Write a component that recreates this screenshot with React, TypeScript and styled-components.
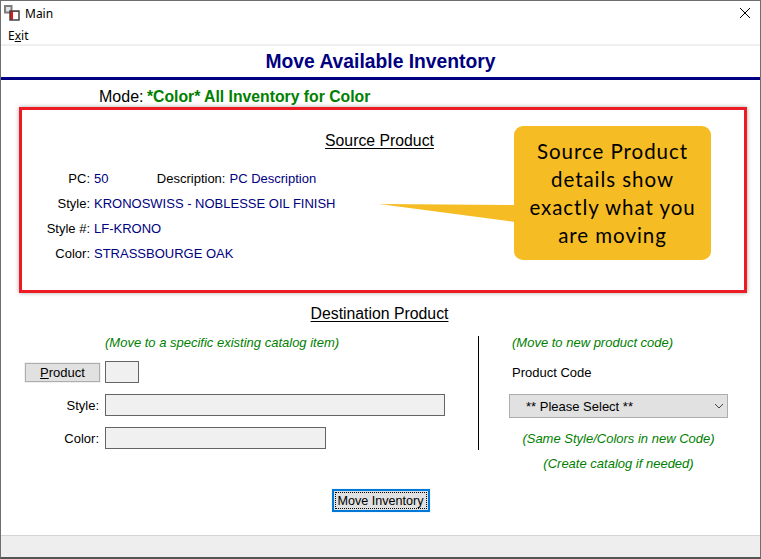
import { createGlobalStyle, styled } from "styled-components";

const GlobalStyle = createGlobalStyle`
  html, body {
    margin: 0;
    padding: 0;
    background: #fff;
  }
  * {
    box-sizing: border-box;
  }
`;

const WINDOW = styled.div`
  width: 761px;
  height: 559px;
  display: flex;
  flex-direction: column;
  overflow: hidden;
  background: #fff;
  border: 1px solid #6e6e6e;
  border-bottom: 2px solid #555;
  font-family: "Liberation Sans", Arial, sans-serif;
  font-size: 13px;
  color: #000;
`;

const TITLEBAR = styled.div`
  height: 24px;
  flex: none;
  display: flex;
  align-items: center;
  padding: 0 8px 0 3px;
  gap: 3px;
  font-family: "Noto Sans", "Open Sans", sans-serif;
  font-size: 12px;
`;

const CLOSE = styled.svg`
  margin-left: auto;
  margin-right: 1px;
`;

const MENU = styled.div`
  height: 21px;
  flex: none;
  padding: 2px 0 0 7px;
  font-family: "Noto Sans", "Open Sans", sans-serif;
  font-size: 12px;
  line-height: 17px;
  border-bottom: 2px solid #f0f0f0;

  u {
    text-underline-offset: 1px;
  }
`;

const HEADER = styled.h1`
  height: 34px;
  flex: none;
  margin: 0;
  padding-top: 4px;
  text-align: center;
  font-size: 19.3px;
  line-height: 23px;
  font-weight: 700;
  color: #000080;
  border-bottom: 3px solid #000080;
`;

const MODE = styled.div`
  height: 27px;
  flex: none;
  padding: 8px 0 0 98px;
  font-size: 16px;
  line-height: 18px;
  color: #000;

  b {
    margin-left: -1px;
    font-size: 15.75px;
    color: #008000;
  }
`;

const SOURCE = styled.section`
  position: relative;
  flex: none;
  width: 728px;
  height: 186px;
  margin-left: 18px;
  padding-top: 21px;
  border: 3px solid #ed1c24;
  box-shadow: 0 0 4px rgba(0, 0, 0, 0.35);
`;

const HEADING = styled.div<{ $shift: number }>`
  text-align: center;
  padding-right: ${(p) => p.$shift}px;
  font-size: 15.8px;
  line-height: 20px;
  text-decoration: underline;
  text-underline-offset: 2px;
`;

const DETAILS = styled.div`
  margin-top: 19px;
  display: flex;
  flex-direction: column;
  gap: 7px;
`;

const DETAILROW = styled.div`
  height: 18px;
  display: flex;
  align-items: center;
  line-height: 18px;
`;

const DETAILLABEL = styled.span<{ $width: number }>`
  width: ${(p) => p.$width}px;
  text-align: right;
  flex: none;
`;

const VALUE = styled.span`
  margin-left: 4px;
  color: #000080;
`;

const CALLOUT = styled.div`
  position: absolute;
  left: 492px;
  top: 16px;
  width: 197px;
  height: 134px;
  display: flex;
  align-items: center;
  justify-content: center;
  text-align: center;
  border-radius: 9px;
  background: #f5bd23;
  font-family: Lato, "Open Sans", sans-serif;
  font-size: 20.5px;
  line-height: 28px;
  letter-spacing: 0.95px;
  color: #000;
`;

const TAIL = styled.svg`
  position: absolute;
  left: 357px;
  top: 93px;
`;

const DESTINATION = styled.section`
  flex: 1;
  padding-top: 11px;
`;

const COLUMNS = styled.div`
  margin-top: 12px;
  display: flex;
  height: 114px;
`;

const LEFTCOL = styled.div`
  width: 478px;
  flex: none;
  border-right: 1px solid #000;
  height: 114px;
`;

const RIGHTCOL = styled.div`
  flex: none;
  width: 218px;
  margin-left: 33px;
`;

const NOTE = styled.div`
  font-style: italic;
  color: #008000;
  line-height: 16px;
`;

const TOPNOTE = styled(NOTE)`
  margin-top: -1px;
`;

const LEFTNOTE = styled(TOPNOTE)`
  padding-left: 104px;
`;

const FORMROW = styled.div`
  display: flex;
  align-items: center;
  height: 22px;
  margin-top: 11px;
`;

const FIRSTROW = styled(FORMROW)`
  margin-top: 10px;
`;

const FIELDLABEL = styled.label`
  width: 98px;
  text-align: right;
  margin-right: 6px;
  flex: none;
`;

const PRODUCTBUTTON = styled.button`
  width: 75px;
  height: 19px;
  margin: 0 5px 0 24px;
  padding: 0;
  flex: none;
  background: #e1e1e1;
  border: 1px solid #adadad;
  outline: 1px solid #f0f0f0;
  font: inherit;
  color: #000;
`;

const FIELD = styled.input<{ $width: number }>`
  width: ${(p) => p.$width}px;
  height: 22px;
  padding: 0;
  flex: none;
  background: #f0f0f0;
  border: 1px solid #646464;
  border-radius: 0;
`;

const CODELABEL = styled.div`
  margin-top: 14px;
  line-height: 16px;
`;

const SELECTBOX = styled.div`
  width: 219px;
  height: 24px;
  margin: 13px 0 0 -3px;
  display: flex;
  align-items: center;
  padding: 0 3px 0 16px;
  background: #e1e1e1;
  border: 1px solid #adadad;
  justify-content: space-between;
`;

const CENTERNOTE = styled(NOTE)`
  width: 219px;
  margin-left: -3px;
  text-align: center;
  margin-top: 13px;
`;

const SECONDNOTE = styled(CENTERNOTE)`
  margin-top: 9px;
`;

const ACTIONS = styled.div`
  display: flex;
  justify-content: center;
  margin-top: 39px;
`;

const MOVEBUTTON = styled.button`
  position: relative;
  width: 98px;
  height: 23px;
  padding: 0;
  background: #e1e1e1;
  border: 2px solid #0078d7;
  outline: 1px solid #f0f8ff;
  font: inherit;
  font-size: 12.6px;
  color: #000;

  &::after {
    content: "";
    position: absolute;
    inset: 1px;
    border: 1px dotted #000;
  }
`;

const STATUSBAR = styled.div`
  height: 22px;
  flex: none;
  background: #eeeeee;
  border-top: 1px solid #d4d4d4;
`;

function AppIcon() {
  return (
    <svg width="18" height="18" viewBox="0 0 18 18">
      <rect x="1" y="2" width="6.5" height="6.5" fill="#e4e4e4" stroke="#7d7d7d" strokeWidth="2" />
      <rect x="6" y="7" width="3" height="9" fill="#ee1111" />
      <rect x="9" y="7" width="5" height="1" fill="#ee4444" />
      <rect x="6" y="7" width="9" height="9" fill="none" stroke="#444" strokeWidth="1.5" />
    </svg>
  );
}

export default function App() {
  return (
    <>
      <GlobalStyle />
      <WINDOW>
        <TITLEBAR>
          <AppIcon />
          <span>Main</span>
          <CLOSE width="12" height="12" viewBox="0 0 12 12">
            <path d="M1 1 L11 11 M11 1 L1 11" stroke="#000" strokeWidth="1" fill="none" />
          </CLOSE>
        </TITLEBAR>
        <MENU>
          E<u>x</u>it
        </MENU>
        <HEADER>Move Available Inventory</HEADER>
        <MODE>
          Mode: <b>*Color* All Inventory for Color</b>
        </MODE>
        <SOURCE>
          <HEADING $shift={7}>Source Product</HEADING>
          <DETAILS>
            <DETAILROW>
              <DETAILLABEL $width={68}>PC:</DETAILLABEL>
              <VALUE>50</VALUE>
              <DETAILLABEL $width={117}>Description:</DETAILLABEL>
              <VALUE>PC Description</VALUE>
            </DETAILROW>
            <DETAILROW>
              <DETAILLABEL $width={68}>Style:</DETAILLABEL>
              <VALUE>KRONOSWISS - NOBLESSE OIL FINISH</VALUE>
            </DETAILROW>
            <DETAILROW>
              <DETAILLABEL $width={68}>Style #:</DETAILLABEL>
              <VALUE>LF-KRONO</VALUE>
            </DETAILROW>
            <DETAILROW>
              <DETAILLABEL $width={68}>Color:</DETAILLABEL>
              <VALUE>STRASSBOURGE OAK</VALUE>
            </DETAILROW>
          </DETAILS>
          <TAIL width="136" height="20" viewBox="0 0 136 20">
            <path d="M0 1 L136 2 L136 19 Z" fill="#f5bd23" />
          </TAIL>
          <CALLOUT>
            <span>
              Source Product
              <br />
              details show
              <br />
              exactly what you
              <br />
              are moving
            </span>
          </CALLOUT>
        </SOURCE>
        <DESTINATION>
          <HEADING $shift={2}>Destination Product</HEADING>
          <COLUMNS>
            <LEFTCOL>
              <LEFTNOTE>(Move to a specific existing catalog item)</LEFTNOTE>
              <FIRSTROW>
                <PRODUCTBUTTON>
                  <u>P</u>roduct
                </PRODUCTBUTTON>
                <FIELD $width={34} />
              </FIRSTROW>
              <FORMROW>
                <FIELDLABEL>Style:</FIELDLABEL>
                <FIELD $width={340} />
              </FORMROW>
              <FORMROW>
                <FIELDLABEL>Color:</FIELDLABEL>
                <FIELD $width={221} />
              </FORMROW>
            </LEFTCOL>
            <RIGHTCOL>
              <TOPNOTE>(Move to new product code)</TOPNOTE>
              <CODELABEL>Product Code</CODELABEL>
              <SELECTBOX>
                <span>** Please Select **</span>
                <svg width="10" height="6" viewBox="0 0 10 6">
                  <path d="M1 1 L5 5 L9 1" stroke="#444" fill="none" />
                </svg>
              </SELECTBOX>
              <CENTERNOTE>(Same Style/Colors in new Code)</CENTERNOTE>
              <SECONDNOTE>(Create catalog if needed)</SECONDNOTE>
            </RIGHTCOL>
          </COLUMNS>
          <ACTIONS>
            <MOVEBUTTON>Move Inventory</MOVEBUTTON>
          </ACTIONS>
        </DESTINATION>
        <STATUSBAR />
      </WINDOW>
    </>
  );
}
